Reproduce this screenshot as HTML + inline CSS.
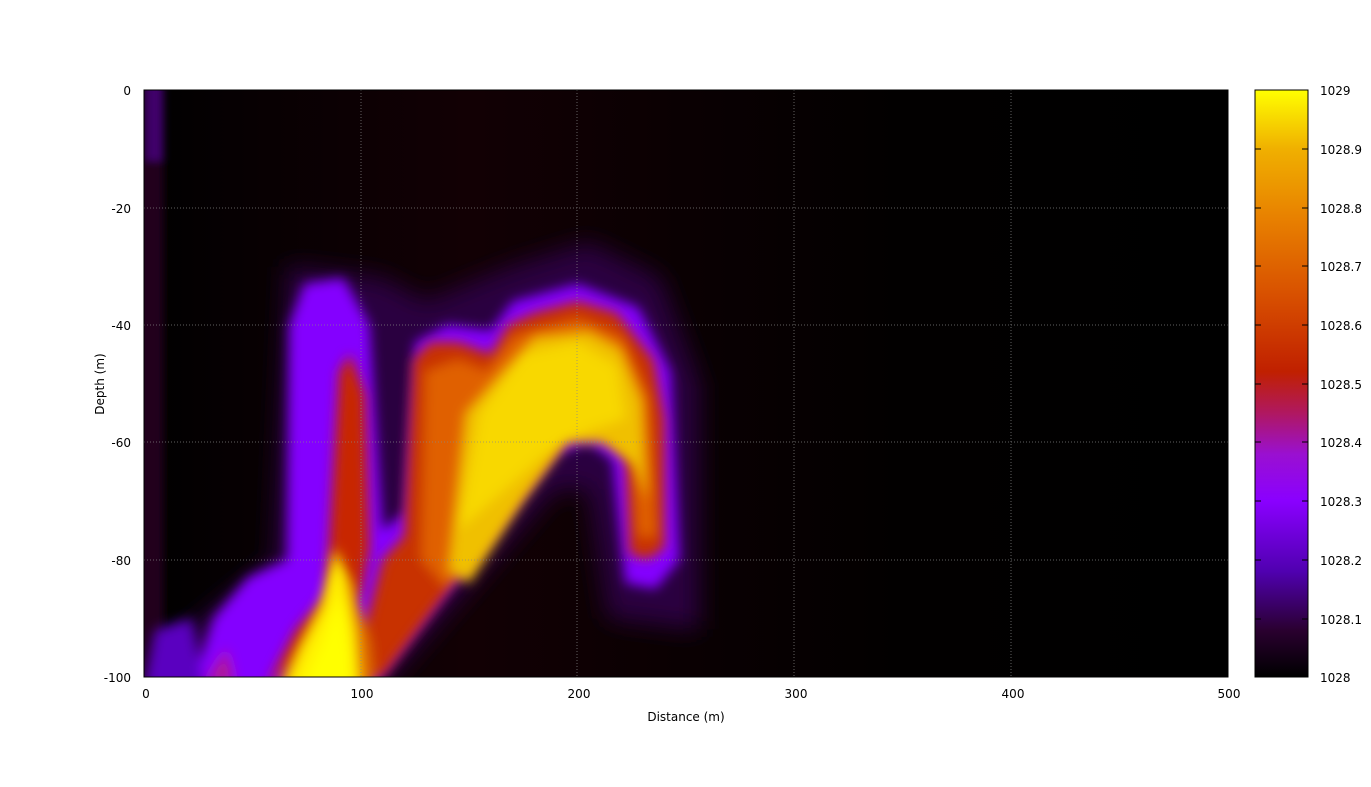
<!DOCTYPE html>
<html><head><style>
body{margin:0;background:#fff;}
text{font-family:"DejaVu Sans","Liberation Sans",sans-serif;font-size:12px;fill:#000;}
</style></head><body>
<svg width="1371" height="782" xmlns="http://www.w3.org/2000/svg">
<defs>
<linearGradient id="bg" x1="0" y1="0" x2="1" y2="0">
<stop offset="0" stop-color="#000"/>
<stop offset="0.08" stop-color="#060002"/>
<stop offset="0.3" stop-color="#120004"/>
<stop offset="0.5" stop-color="#0a0002"/>
<stop offset="0.7" stop-color="#020000"/>
<stop offset="1" stop-color="#000"/>
</linearGradient>
<linearGradient id="cb" x1="0" y1="1" x2="0" y2="0">
<stop offset="0" stop-color="#000"/>
<stop offset="0.08" stop-color="#2a0030"/>
<stop offset="0.18" stop-color="#5000b0"/>
<stop offset="0.3" stop-color="#8a00ff"/>
<stop offset="0.38" stop-color="#9a10d0"/>
<stop offset="0.45" stop-color="#b01860"/>
<stop offset="0.52" stop-color="#c02000"/>
<stop offset="0.65" stop-color="#d85000"/>
<stop offset="0.78" stop-color="#e88000"/>
<stop offset="0.9" stop-color="#f0b000"/>
<stop offset="1" stop-color="#ffff00"/>
</linearGradient>
<filter id="b8" x="-50%" y="-50%" width="200%" height="200%"><feGaussianBlur stdDeviation="12"/></filter>
<filter id="b4" x="-50%" y="-50%" width="200%" height="200%"><feGaussianBlur stdDeviation="6"/></filter>
<filter id="b2" x="-50%" y="-50%" width="200%" height="200%"><feGaussianBlur stdDeviation="4"/></filter>
<clipPath id="cp"><rect x="144" y="90" width="1084" height="587"/></clipPath>
</defs>
<g clip-path="url(#cp)">
<rect x="144" y="90" width="1084" height="587" fill="url(#bg)"/>
<g filter="url(#b2)"><g transform="translate(144,90) scale(2.168,-5.87)">
<rect x="-2" y="-102" width="11" height="104" fill="#22001e"/>
<rect x="1" y="-12" width="8" height="14" fill="#40006a"/>
</g></g>
<g filter="url(#b8)"><g transform="translate(144,90) scale(2.168,-5.87)">
<polygon fill="#2c0040" points="0,-104 10,-95 60,-80 66,-30 110,-32 130,-36 170,-30 205,-26 238,-32 256,-50 256,-92 214,-90 205,-68 190,-68 105,-104"/>
</g></g>
<g filter="url(#b4)"><g transform="translate(144,90) scale(2.168,-5.87)">
<polygon fill="#8400ff" points="22,-102 32,-90 48,-83 66,-80 67,-40 74,-33 92,-32 104,-40 110,-75 120,-72 125,-43 140,-40 160,-41 170,-36 200,-33 228,-37 243,-48 247,-80 236,-85 222,-84 216,-63 205,-60 190,-62 105,-102"/>
<polygon fill="#5a00c0" points="0,-102 5,-92 22,-90 28,-102"/>
<polygon fill="#b01890" points="28,-101 38,-95 42,-101"/>
</g></g>
<g filter="url(#b4)"><g transform="translate(144,90) scale(2.168,-5.87)">
<polygon fill="#c82800" points="56,-102 70,-92 84,-86 90,-48 95,-45 102,-52 104,-78 100,-86"/>
<polygon fill="#c83000" points="96,-100 110,-80 120,-76 124,-46 132,-43 145,-43 160,-45 168,-40 180,-38 200,-36 218,-38 235,-46 240,-56 240,-78 232,-80 224,-79 222,-62 210,-58 195,-59 180,-66 110,-100"/>
<polygon fill="#e06000" points="128,-80 130,-48 145,-46 158,-48 170,-42 200,-39 220,-42 232,-52 236,-76 228,-76 226,-62 205,-57 188,-60 140,-85"/>
<polygon fill="#e07000" points="62,-102 76,-92 88,-82 96,-84 104,-94 106,-102"/>
</g></g>
<g filter="url(#b4)"><g transform="translate(144,90) scale(2.168,-5.87)">
<polygon fill="#f0c000" points="140,-82 148,-55 165,-48 180,-42 205,-41 220,-44 230,-53 232,-70 226,-64 212,-60 195,-60 175,-70 150,-84"/>
<polygon fill="#f8d800" points="145,-75 155,-55 175,-45 200,-43 218,-47 222,-56 205,-58 185,-62"/>
<polygon fill="#ffee00" points="64,-102 72,-95 82,-88 88,-78 93,-82 98,-92 100,-102"/>
<polygon fill="#ffff00" points="72,-102 82,-94 90,-86 95,-96 95,-102"/>
</g></g>
</g>
<g stroke="#888" stroke-width="1" stroke-dasharray="1,2" opacity="0.7">
<line x1="361" y1="90" x2="361" y2="677"/><line x1="577" y1="90" x2="577" y2="677"/>
<line x1="794" y1="90" x2="794" y2="677"/><line x1="1011" y1="90" x2="1011" y2="677"/>
<line x1="144" y1="208" x2="1228" y2="208"/><line x1="144" y1="325" x2="1228" y2="325"/>
<line x1="144" y1="442" x2="1228" y2="442"/><line x1="144" y1="560" x2="1228" y2="560"/>
</g>
<rect x="144" y="90" width="1084" height="587" fill="none" stroke="#000" stroke-width="1"/>
<rect x="1255" y="90" width="53" height="587" fill="url(#cb)" stroke="#000"/>
<g stroke="#000">
<line x1="1255" y1="149" x2="1261" y2="149"/><line x1="1302" y1="149" x2="1308" y2="149"/>
<line x1="1255" y1="208" x2="1261" y2="208"/><line x1="1302" y1="208" x2="1308" y2="208"/>
<line x1="1255" y1="266" x2="1261" y2="266"/><line x1="1302" y1="266" x2="1308" y2="266"/>
<line x1="1255" y1="325" x2="1261" y2="325"/><line x1="1302" y1="325" x2="1308" y2="325"/>
<line x1="1255" y1="384" x2="1261" y2="384"/><line x1="1302" y1="384" x2="1308" y2="384"/>
<line x1="1255" y1="442" x2="1261" y2="442"/><line x1="1302" y1="442" x2="1308" y2="442"/>
<line x1="1255" y1="501" x2="1261" y2="501"/><line x1="1302" y1="501" x2="1308" y2="501"/>
<line x1="1255" y1="560" x2="1261" y2="560"/><line x1="1302" y1="560" x2="1308" y2="560"/>
<line x1="1255" y1="619" x2="1261" y2="619"/><line x1="1302" y1="619" x2="1308" y2="619"/>
</g>
<g>
<text x="1320" y="95">1029</text><text x="1320" y="154">1028.9</text><text x="1320" y="213">1028.8</text>
<text x="1320" y="271">1028.7</text><text x="1320" y="330">1028.6</text><text x="1320" y="389">1028.5</text>
<text x="1320" y="447">1028.4</text><text x="1320" y="506">1028.3</text><text x="1320" y="565">1028.2</text>
<text x="1320" y="624">1028.1</text><text x="1320" y="682">1028</text>
</g>
<g text-anchor="end">
<text x="131" y="95">0</text><text x="131" y="213">-20</text><text x="131" y="330">-40</text>
<text x="131" y="447">-60</text><text x="131" y="565">-80</text><text x="131" y="682">-100</text>
</g>
<g text-anchor="middle">
<text x="146" y="698">0</text><text x="362" y="698">100</text><text x="579" y="698">200</text>
<text x="796" y="698">300</text><text x="1013" y="698">400</text><text x="1229" y="698">500</text>
<text x="686" y="721">Distance (m)</text>
</g>
<text transform="translate(104,384) rotate(-90)" text-anchor="middle">Depth (m)</text>
</svg>
</body></html>
